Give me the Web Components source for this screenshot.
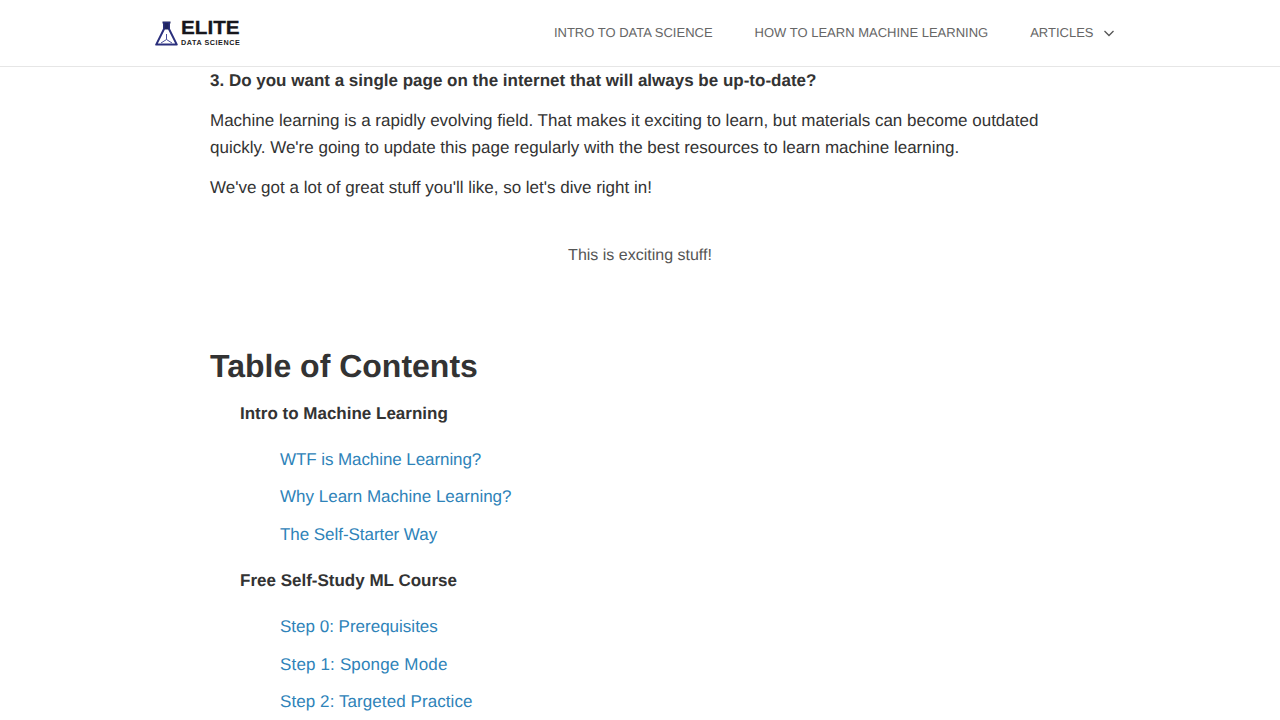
<!DOCTYPE html>
<html><head><meta charset="utf-8"><style>
html,body{margin:0;padding:0;height:720px;overflow:hidden;background:#fff}
body{font-family:"Liberation Sans",Arial,sans-serif;color:#333;text-rendering:geometricPrecision}
</style></head><body>
<site-header></site-header>
<article-body>
<strong-line>3. Do you want a single page on the internet that will always be up-to-date?</strong-line>
<para-text>Machine learning is a rapidly evolving field. That makes it exciting to learn, but materials can become outdated quickly. We're going to update this page regularly with the best resources to learn machine learning.</para-text>
<para-text>We've got a lot of great stuff you'll like, so let's dive right in!</para-text>
<center-note>This is exciting stuff!</center-note>
<toc-block></toc-block>
</article-body>
<script>
function def(name,html){customElements.define(name,class extends HTMLElement{constructor(){super();this.attachShadow({mode:'open'}).innerHTML=html}})}
def('site-header',`<style>
:host{display:flex;height:66px;border-bottom:1px solid #e6e6e6;box-sizing:content-box;align-items:center;padding:0 166.500px 0 155px;justify-content:space-between;background:#fff}
.logo{display:flex;align-items:center;gap:3px;height:27px}
.w{display:flex;flex-direction:column;font-weight:700;width:60px;padding-top:1px}
.e{font-size:19px;line-height:17px;color:#16161c;-webkit-text-stroke:.3px #16161c;transform:scaleX(1.09);transform-origin:left}
.d{font-size:7.200px;line-height:8px;letter-spacing:.56px;color:#1b1b22;white-space:nowrap;margin-top:2px}
nav{display:flex;gap:42px;font-size:13px;color:#666;align-items:center;line-height:16px}
.a{display:flex;align-items:center;gap:10px}
</style>
<div class="logo"><svg width="23" height="25" viewBox="0 0 23 25"><path d="M7.500 1.500h8" stroke="#20245e" stroke-width="2" fill="none"/><path d="M9 2v6L1.200 23.600h20.600L14 8V2z" fill="#fff" stroke="#2a2f7c" stroke-width="2" stroke-linejoin="round"/><path d="M9.500 2h4v6.500h-4z" fill="#20245e"/><path d="M11.500 13v5.500L6 22M11.500 18.500 17 22" stroke="#4a4f9c" stroke-width="1" fill="none"/></svg>
<div class="w"><span class="e">ELITE</span><span class="d">DATA SCIENCE</span></div></div>
<nav><span>INTRO TO DATA SCIENCE</span><span>HOW TO LEARN MACHINE LEARNING</span><span class="a">ARTICLES <svg width="10" height="7" viewBox="0 0 10 7"><path d="M.5 1 5 5.500 9.500 1" stroke="#555" stroke-width="1.300" fill="none"/></svg></span></nav>`);
def('article-body',`<style>:host{display:block;padding:0 210px;font-size:17px;line-height:27px}</style><slot></slot>`);
def('strong-line',`<style>:host{display:block;font-weight:700;margin-bottom:13px}</style><slot></slot>`);
def('para-text',`<style>:host{display:block;margin-bottom:13px}</style><slot></slot>`);
def('center-note',`<style>:host{display:block;text-align:center;font-size:16px;color:#555;margin-top:41px;margin-bottom:77px}</style><slot></slot>`);
def('toc-group',`<style>:host{display:block}.t{font-weight:700;padding-left:30px;height:27px;margin-bottom:19px}.l{padding-left:70px;display:flex;flex-direction:column;gap:10.500px;margin-bottom:19.600px}</style><div class="t"><slot name="t"></slot></div><div class="l"><slot></slot></div>`);
def('toc-link',`<style>:host{display:block;color:#2e83b9}</style><slot></slot>`);
def('toc-block',`<style>:host{display:block}h2{font-size:32px;line-height:40px;margin:0 0 13.600px;color:#333}</style><h2>Table of Contents</h2>
<toc-group><span slot="t">Intro to Machine Learning</span><toc-link style="letter-spacing:-.08px">WTF is Machine Learning?</toc-link><toc-link>Why Learn Machine Learning?</toc-link><toc-link style="letter-spacing:-.05px">The Self-Starter Way</toc-link></toc-group>
<toc-group><span slot="t">Free Self-Study ML Course</span><toc-link>Step 0: Prerequisites</toc-link><toc-link style="letter-spacing:.16px">Step 1: Sponge Mode</toc-link><toc-link style="letter-spacing:.08px">Step 2: Targeted Practice</toc-link></toc-group>`);
</script></body></html>
